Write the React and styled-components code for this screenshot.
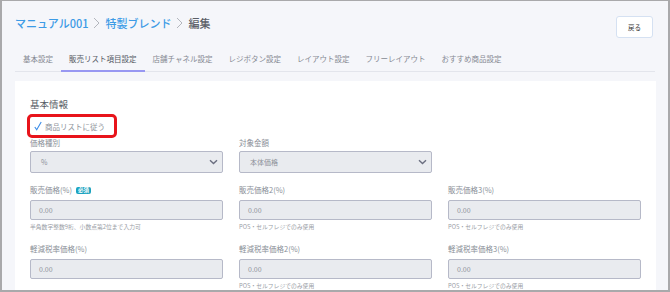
import React from 'react'
import styled, { createGlobalStyle } from 'styled-components'

const GlobalStyle = createGlobalStyle`
  html, body { margin: 0; padding: 0; }
  body {
    font-family: "Noto Sans CJK JP", "Noto Sans", sans-serif;
    background: #ffffff;
  }
  * { box-sizing: border-box; }
`;

const Frame = styled.div`
  width: 670px;
  height: 292px;
  overflow: hidden;
  border: 2px solid #a9a9ab;
  border-top-width: 1px;
  background: #f5f6fa;
  padding: 0 12px 0 13px;
`;

const Header = styled.div`
  display: flex;
  justify-content: space-between;
  align-items: flex-start;
  height: 44px;
  padding: 12px 3px 0 0;
`;

const Breadcrumb = styled.div`
  display: flex;
  align-items: center;
  gap: 5px;
  height: 20px;
  font-size: 11px;
  font-weight: 500;
`;

const Crumb = styled.span`
  color: ${({ current }) => (current ? '#5a5e66' : '#3c9be6')};
`;

const BackButton = styled.button`
  margin-top: 3px;
  width: 37px;
  height: 22px;
  border: 1px solid #d5e1f2;
  border-radius: 3px;
  background: #ffffff;
  font-family: inherit;
  font-size: 6.5px;
  color: #333;
  padding: 0;
`;

const Tabs = styled.div`
  display: flex;
  height: 27px;
  border-bottom: 1px solid #e3e5ec;
  margin-right: 1px;
`;

const Tab = styled.div`
  padding: 8px 8px 0;
  font-size: 7.5px;
  line-height: 12px;
  color: ${({ active }) => (active ? '#555a63' : '#858992')};
  border-bottom: 2px solid ${({ active }) => (active ? '#9898f2' : 'transparent')};
  margin-bottom: -1px;
`;

const Card = styled.div`
  margin-top: 9px;
  background: #ffffff;
  padding: 15px 16px 0 15px;
  height: 230px;
`;

const SectionTitle = styled.div`
  font-size: 9.5px;
  line-height: 16px;
  height: 16px;
  color: #555a63;
`;

const FollowBox = styled.div`
  display: inline-flex;
  align-items: center;
  gap: 3px;
  margin-left: -3px;
  height: 24px;
  padding: 0 9px 0 4px;
  border: 3px solid #e8141b;
  border-radius: 5px;
  font-size: 7.5px;
  color: #8e939b;
`;

const Rows = styled.div`
  display: grid;
  grid-template-columns: repeat(3, 193px);
  column-gap: 16px;
  row-gap: 11px;
`;

const Field = styled.div`
  display: flex;
  flex-direction: column;
`;

const Label = styled.div`
  display: flex;
  align-items: center;
  gap: 4px;
  font-size: 7.5px;
  height: ${({ compact }) => (compact ? '10px' : '12px')};
  line-height: ${({ compact }) => (compact ? '10px' : '12px')};
  color: #8a8f98;
`;

const Badge = styled.span`
  display: inline-block;
  background: #1ca3bf;
  color: #fff;
  font-size: 5.5px;
  font-weight: 700;
  line-height: 7px;
  padding: 0 2px;
  border-radius: 2px;
`;

const Box = styled.div`
  display: flex;
  align-items: center;
  justify-content: space-between;
  margin-top: ${({ tight }) => (tight ? '3px' : '4px')};
  height: ${({ tight }) => (tight ? '22px' : '20px')};
  padding: 0 4px 0 ${({ tight }) => (tight ? '10px' : '8px')};
  background: #e9ebef;
  border: 1.5px solid #b6b9c8;
  border-radius: 2px;
  font-size: 7px;
  color: #8d9199;
`;

const Hint = styled.div`
  margin-top: 2px;
  height: 10px;
  line-height: 10px;
  font-size: 5.8px;
  color: #9a9ea6;
`;

const Chevron = () => (
  <svg width="9" height="6" viewBox="0 0 9 6">
    <path d="M1 1.2 L4.5 4.6 L8 1.2" fill="none" stroke="#6b6f80" strokeWidth="1.4" />
  </svg>
);

const Check = () => (
  <svg width="8" height="10" viewBox="0 0 8 10">
    <path d="M0.8 6 L2.7 8.8 L7.2 1" fill="none" stroke="#3a8ce8" strokeWidth="1.1" />
  </svg>
);

const Sep = () => (
  <svg width="7" height="12" viewBox="0 0 7 12">
    <path d="M1 1 L6 6 L1 11" fill="none" stroke="#b3b6bd" strokeWidth="1" />
  </svg>
);

const tabs = ['基本設定', '販売リスト項目設定', '店舗チャネル設定', 'レジボタン設定', 'レイアウト設定', 'フリーレイアウト', 'おすすめ商品設定'];

const posNote = 'POS・セルフレジでのみ使用';

const priceFields = [
  { label: '販売価格(%)', required: true, hint: '半角数字整数9桁、小数点第2位まで入力可' },
  { label: '販売価格2(%)', hint: posNote },
  { label: '販売価格3(%)', hint: posNote },
  { label: '軽減税率価格(%)' },
  { label: '軽減税率価格2(%)', hint: posNote },
  { label: '軽減税率価格3(%)', hint: posNote },
];

const App = () => {
  return (
    <Frame>
      <GlobalStyle />
      <Header>
        <Breadcrumb>
          <Crumb>マニュアル001</Crumb>
          <Sep />
          <Crumb>特製ブレンド</Crumb>
          <Sep />
          <Crumb current>編集</Crumb>
        </Breadcrumb>
        <BackButton>戻る</BackButton>
      </Header>
      <Tabs>
        {tabs.map((t, i) => (
          <Tab key={t} active={i === 1}>{t}</Tab>
        ))}
      </Tabs>
      <Card>
        <SectionTitle>基本情報</SectionTitle>
        <FollowBox>
          <Check />
          商品リストに従う
        </FollowBox>
        <Rows>
          <Field>
            <Label compact>価格種別</Label>
            <Box tight>% <Chevron /></Box>
          </Field>
          <Field>
            <Label compact>対象金額</Label>
            <Box tight>本体価格 <Chevron /></Box>
          </Field>
          <div />
          {priceFields.map((f) => (
            <Field key={f.label}>
              <Label>
                {f.label}
                {f.required && <Badge>必須</Badge>}
              </Label>
              <Box>0.00</Box>
              {f.hint && <Hint>{f.hint}</Hint>}
            </Field>
          ))}
        </Rows>
      </Card>
    </Frame>
  )
}

export default App
